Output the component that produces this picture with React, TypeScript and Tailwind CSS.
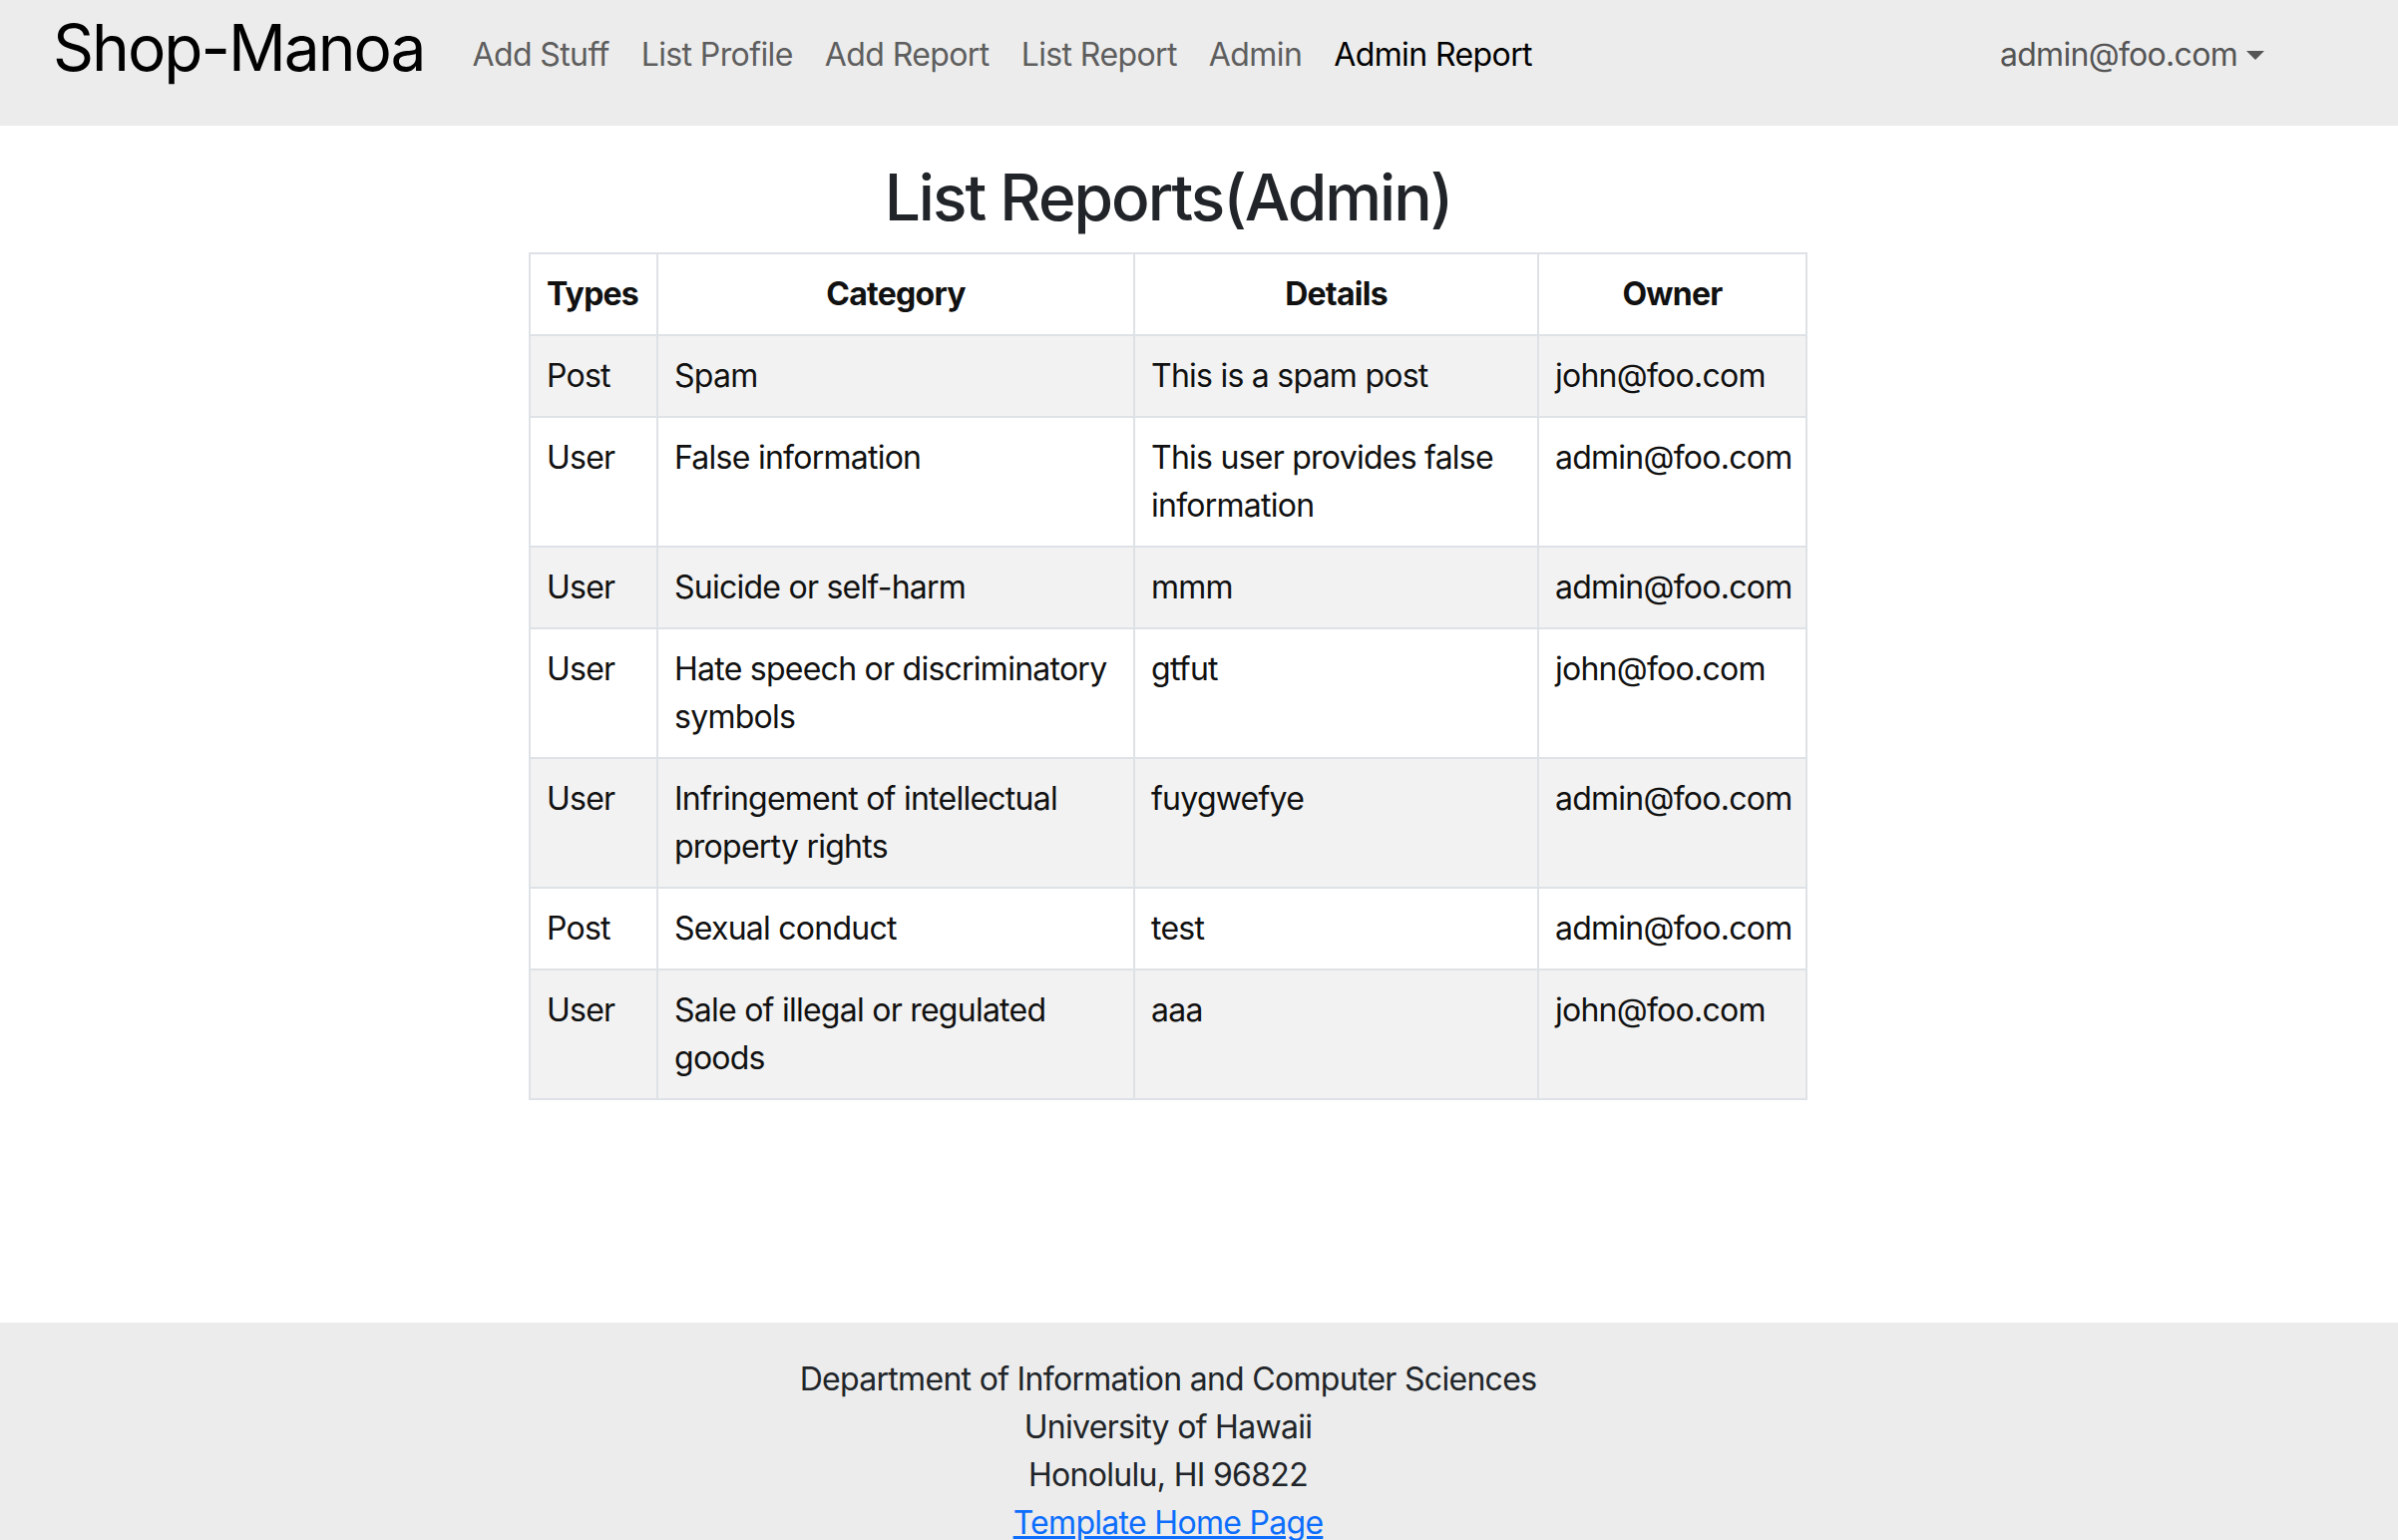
import React from 'react';

type Report = {
  type: string;
  category: string;
  details: string;
  owner: string;
};

const reports: Report[] = [
  { type: 'Post', category: 'Spam', details: 'This is a spam post', owner: 'john@foo.com' },
  { type: 'User', category: 'False information', details: 'This user provides false information', owner: 'admin@foo.com' },
  { type: 'User', category: 'Suicide or self-harm', details: 'mmm', owner: 'admin@foo.com' },
  { type: 'User', category: 'Hate speech or discriminatory symbols', details: 'gtfut', owner: 'john@foo.com' },
  { type: 'User', category: 'Infringement of intellectual property rights', details: 'fuygwefye', owner: 'admin@foo.com' },
  { type: 'Post', category: 'Sexual conduct', details: 'test', owner: 'admin@foo.com' },
  { type: 'User', category: 'Sale of illegal or regulated goods', details: 'aaa', owner: 'john@foo.com' },
];

const navLinks = ['Add Stuff', 'List Profile', 'Add Report', 'List Report', 'Admin'];

const NavBar: React.FC = () => (
  <nav className="h-[126px] bg-[#ececec] flex items-start justify-between pl-[53px] pr-[118px]">
    <div className="flex items-start">
      <a className="pt-[9px] text-[64px] leading-[77px] text-black mr-[32px] tracking-[-2px]">Shop-Manoa</a>
      <ul className="flex items-start pt-[31px]">
        {navLinks.map((link) => (
          <li key={link}>
            <a className="block px-[16px] text-[32px] leading-[48px] text-[#5e5e5e] tracking-[-0.6px]">{link}</a>
          </li>
        ))}
        <li>
          <a className="block px-[16px] text-[32px] leading-[48px] text-black tracking-[-0.6px]">Admin Report</a>
        </li>
      </ul>
    </div>
    <div className="pt-[31px]">
      <a className="flex items-center px-[16px] text-[32px] leading-[48px] text-[#555] tracking-[-0.7px]">
        admin@foo.com
        <span className="ml-[9px] w-0 h-0 border-t-[9px] border-t-[#555] border-x-[9px] border-x-transparent" />
      </a>
    </div>
  </nav>
);

const ReportTable: React.FC = () => (
  <table className="w-[1280px] table-fixed border-collapse border-2 border-[#dee2e6] text-[32px] leading-[48px] text-[#111] tracking-[-0.75px]">
    <colgroup>
      <col className="w-[128px]" />
      <col className="w-[478px]" />
      <col className="w-[405px]" />
      <col className="w-[269px]" />
    </colgroup>
    <thead>
      <tr>
        <th className="border-2 border-[#dee2e6] px-[16px] py-[16px] text-left font-bold">Types</th>
        <th className="border-2 border-[#dee2e6] px-[16px] py-[16px] text-center font-bold">Category</th>
        <th className="border-2 border-[#dee2e6] px-[16px] py-[16px] text-center font-bold">Details</th>
        <th className="border-2 border-[#dee2e6] px-[16px] py-[16px] text-center font-bold">Owner</th>
      </tr>
    </thead>
    <tbody>
      {reports.map((r, i) => (
        <tr key={i} className={i % 2 === 0 ? 'bg-[#f2f2f2]' : 'bg-white'}>
          <td className="border-2 border-[#dee2e6] px-[16px] py-[16px] align-top">{r.type}</td>
          <td className="border-2 border-[#dee2e6] px-[16px] py-[16px] align-top">{r.category}</td>
          <td className="border-2 border-[#dee2e6] px-[16px] py-[16px] align-top">{r.details}</td>
          <td className="border-2 border-[#dee2e6] px-[16px] py-[16px] align-top">{r.owner}</td>
        </tr>
      ))}
    </tbody>
  </table>
);

const Footer: React.FC = () => (
  <footer className="bg-[#ececec] pt-[33px] pb-[32px] pr-[62px]">
    <div className="flex flex-col items-center text-[32px] leading-[48px] text-[#212529] tracking-[-0.7px]">
      <span>Department of Information and Computer Sciences</span>
      <span>University of Hawaii</span>
      <span>Honolulu, HI 96822</span>
      <a className="text-[#0d6efd] underline">Template Home Page</a>
    </div>
  </footer>
);

export default function App() {
  return (
    <div className="min-h-screen bg-white font-[Inter,'Noto_Sans',sans-serif]">
      <NavBar />
      <main className="h-[1200px] pr-[62px] flex flex-col items-center">
        <h2 className="mt-[33px] mb-[17px] text-[64px] leading-[77px] font-medium text-[#212529] tracking-[-2px]">
          List Reports(Admin)
        </h2>
        <ReportTable />
      </main>
      <Footer />
    </div>
  );
}
